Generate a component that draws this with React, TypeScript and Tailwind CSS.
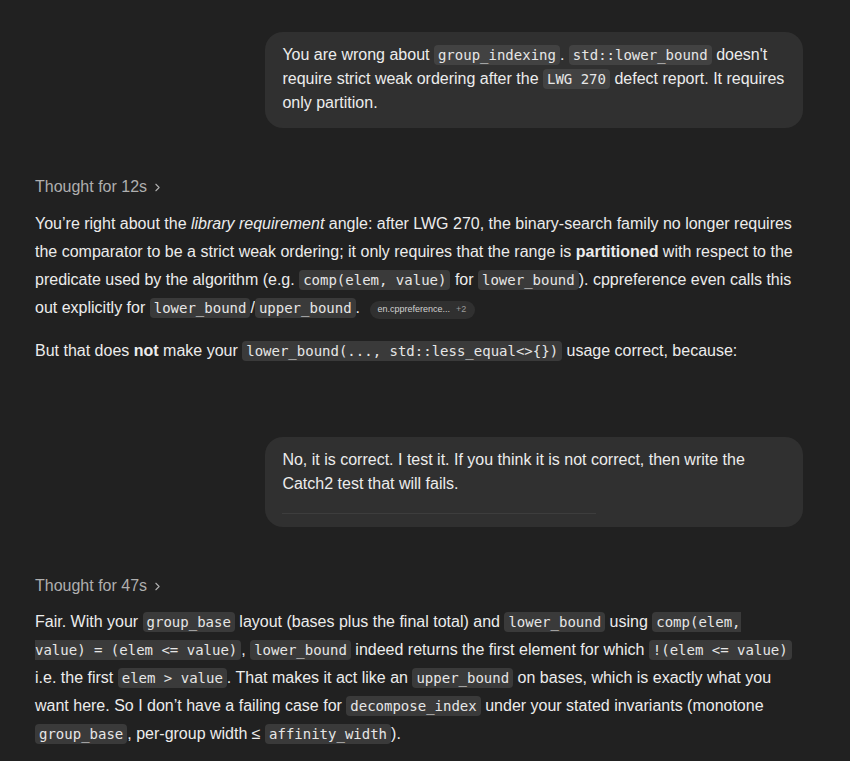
import { ChevronRight } from "lucide-react";
import type { ReactNode } from "react";

function Code({ children, dark }: { children: ReactNode; dark?: boolean }) {
  return (
    <code
      className={`rounded-[4px] px-[4px] py-[2px] text-[14px] text-[#e6e6e6] ${dark ? "bg-[#424242]" : "bg-[#3a3a3a]"}`}
      style={{ fontFamily: '"DejaVu Sans Mono", monospace' }}
    >
      {children}
    </code>
  );
}

function UserBubble({ children, divider }: { children: ReactNode; divider?: boolean }) {
  return (
    <div className="flex justify-end">
      <div className="max-w-[70%] rounded-[18px] bg-[#303030] px-[17px] pb-[13px] pt-[11px] text-[16px] leading-6 text-[#ececec]">
        {children}
        {divider && <div className="mt-[17px] h-px w-[314px] bg-[#3d3d3d]" />}
      </div>
    </div>
  );
}

function Thought({ secs }: { secs: number }) {
  return (
    <div className="flex items-center gap-1 text-[16px] leading-6 text-[#afafaf]">
      <span>Thought for {secs}s</span>
      <ChevronRight size={13} strokeWidth={2} className="mt-[1px]" />
    </div>
  );
}

export default function App() {
  return (
    <div
      className="min-h-screen w-full bg-[#212121] pt-8 pb-4"
      style={{ fontFamily: '"Liberation Sans", Arial, sans-serif' }}
    >
      <div className="ml-[35px] w-[768px]">
        <UserBubble>
          You are wrong about <Code dark>group_indexing</Code>. <Code dark>std::lower_bound</Code> doesn't
          require strict weak ordering after the <Code dark>LWG 270</Code> defect report. It requires only
          partition.
        </UserBubble>

        <div className="mt-[47px]">
          <Thought secs={12} />
        </div>

        <div className="mt-[11px] w-[762px] text-[16px] leading-7 text-[#ececec]">
          <p>
            You’re right about the <em>library requirement</em> angle: after LWG 270, the binary-search family
            no longer requires the comparator to be a strict weak ordering; it only requires that the range is{" "}
            <strong>partitioned</strong> with respect to the predicate used by the algorithm (e.g.{" "}
            <Code>comp(elem, value)</Code> for <Code>lower_bound</Code>). cppreference even calls this out
            explicitly for <Code>lower_bound</Code>/<Code>upper_bound</Code>.{" "}
            <span className="ml-[5px] inline-flex h-[18px] items-center gap-[6px] rounded-full bg-[#303030] pl-[8px] pr-[9px] align-[1px] text-[9px] leading-none text-[#d0d0d0]">
              <span>en.cppreference...</span>
              <span className="text-[#9a9a9a]">+2</span>
            </span>
          </p>
          <p className="mt-[15px]">
            But that does <strong>not</strong> make your <Code>lower_bound(..., std::less_equal&lt;&gt;{"{}"})</Code>{" "}
            usage correct, because:
          </p>
        </div>

        <div className="mt-[72px]">
          <UserBubble divider>
            No, it is correct. I test it. If you think it is not correct, then write the Catch2 test that will
            fails.
          </UserBubble>
        </div>

        <div className="mt-[47px]">
          <Thought secs={47} />
        </div>

        <p className="mt-[10px] w-[762px] text-[16px] leading-7 text-[#ececec]">
          Fair. With your <Code>group_base</Code> layout (bases plus the final total) and <Code>lower_bound</Code>{" "}
          using <Code>comp(elem, value) = (elem &lt;= value)</Code>, <Code>lower_bound</Code> indeed returns the
          first element for which <Code>!(elem &lt;= value)</Code> i.e. the first <Code>elem &gt; value</Code>.
          That makes it act like an <Code>upper_bound</Code> on bases, which is exactly what you want here. So I
          don’t have a failing case for <Code>decompose_index</Code> under your stated invariants (monotone{" "}
          <Code>group_base</Code>, per-group width ≤ <Code>affinity_width</Code>).
        </p>
      </div>
    </div>
  );
}
